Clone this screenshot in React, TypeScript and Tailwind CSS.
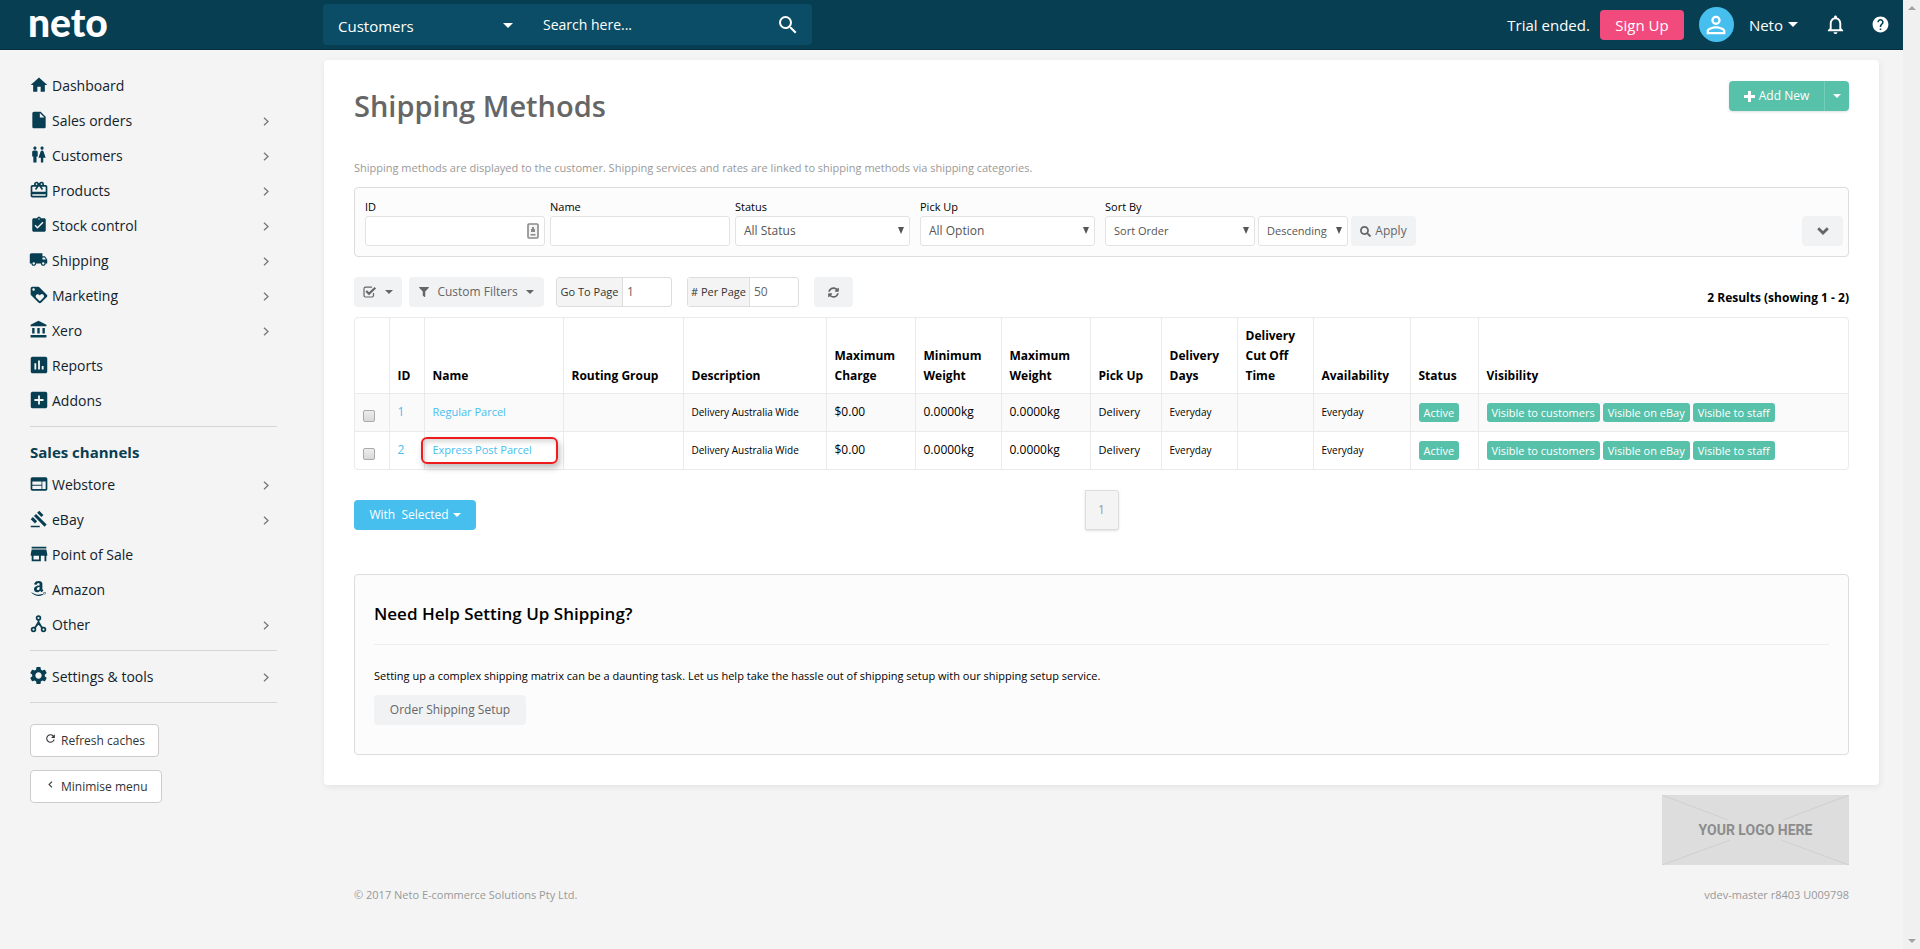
import { ReactNode } from "react"
import { IconType } from "react-icons"
import {
    MdAccountBalance, MdAddBox, MdAssessment, MdAssignmentTurnedIn, MdCardGiftcard, MdChevronLeft,
    MdGavel, MdHelp, MdHome, MdInsertDriveFile, MdLocalShipping, MdLoyalty, MdNotificationsNone,
    MdPersonOutline, MdRefresh, MdSearch, MdSettings, MdStore, MdWc, MdWeb,
} from "react-icons/md"
import { FaAmazon, FaFilter, FaSearch, FaSyncAlt } from "react-icons/fa"

type NavEntry = { label: string; icon: ReactNode; arrow?: boolean }

const mainNav: NavEntry[] = [
    { label: "Dashboard", icon: <MdHome size={20} /> },
    { label: "Sales orders", icon: <MdInsertDriveFile size={20} />, arrow: true },
    { label: "Customers", icon: <MdWc size={19} />, arrow: true },
    { label: "Products", icon: <MdCardGiftcard size={20} />, arrow: true },
    { label: "Stock control", icon: <MdAssignmentTurnedIn size={18} />, arrow: true },
    { label: "Shipping", icon: <MdLocalShipping size={19} />, arrow: true },
    { label: "Marketing", icon: <MdLoyalty size={20} />, arrow: true },
    { label: "Xero", icon: <MdAccountBalance size={19} />, arrow: true },
    { label: "Reports", icon: <MdAssessment size={22} /> },
    { label: "Addons", icon: <MdAddBox size={22} /> },
]

const channelNav: NavEntry[] = [
    { label: "Webstore", icon: <MdWeb size={20} />, arrow: true },
    { label: "eBay", icon: <MdGavel size={18} />, arrow: true },
    { label: "Point of Sale", icon: <MdStore size={22} /> },
    { label: "Amazon", icon: <FaAmazon size={17} /> },
    { label: "Other", icon: <NodesIcon />, arrow: true },
]

const columns = [
    { label: "", width: "w-[34px]" },
    { label: "ID", width: "w-[35px]" },
    { label: "Name", width: "w-[139px]" },
    { label: "Routing Group", width: "w-[120px]" },
    { label: "Description", width: "w-[143px]" },
    { label: "Maximum Charge", width: "w-[89px]" },
    { label: "Minimum Weight", width: "w-[86px]" },
    { label: "Maximum Weight", width: "w-[89px]" },
    { label: "Pick Up", width: "w-[71px]" },
    { label: "Delivery Days", width: "w-[76px]" },
    { label: "Delivery Cut Off Time", width: "w-[76px]" },
    { label: "Availability", width: "w-[97px]" },
    { label: "Status", width: "w-[68px]" },
    { label: "Visibility", width: "" },
]

const methods = [
    { id: 1, name: "Regular Parcel", marked: false },
    { id: 2, name: "Express Post Parcel", marked: true },
]

export default function App() {
    return (
        <div className="flex min-h-screen bg-[#f4f4f4] font-['Open_Sans','Noto_Sans',sans-serif] text-xs text-black">
            <div className="flex min-w-0 flex-1 flex-col">
                <Header />
                <div className="flex flex-1">
                    <Sidebar />
                    <main className="min-w-0 flex-1 pt-2.5 pr-6">
                        <div className="rounded bg-white px-[30px] pt-[21px] pb-[30px] shadow-[1px_2px_6px_rgba(0,0,0,0.07)]">
                            <TitleRow />
                            <p className="mt-[33px] text-[11px] leading-[18px] text-[#999]">
                                Shipping methods are displayed to the customer. Shipping services and rates are linked to shipping methods via shipping categories.
                            </p>
                            <FilterPanel />
                            <Toolbar />
                            <MethodsTable />
                            <TableFooter />
                            <HelpPanel />
                        </div>
                        <Footer />
                    </main>
                </div>
            </div>
            <div className="flex w-[17px] flex-col items-center justify-between bg-[#f0f0f0] py-1.5 text-[#a3a3a3]">
                <Triangle className="h-1 w-2 rotate-180" />
                <Triangle className="h-1 w-2" />
            </div>
        </div>
    )
}

function Header() {
    return (
        <header className="flex h-[50px] items-center border-b border-[#06303f] bg-[#083e51] text-white">
            <a href="#" className="w-[323px] pb-1.5 pl-7 font-[Lato] text-[39px] leading-[44px] font-black">neto</a>
            <form className="flex h-[41px] w-[489px] items-center rounded bg-[#0b4d66]">
                <div className="relative w-[205px]">
                    <select aria-label="Search in" className="w-full appearance-none bg-transparent pt-0.5 pl-[15px] text-[15px] leading-6 outline-none">
                        <option>Customers</option>
                    </select>
                    <Triangle className="pointer-events-none absolute top-[11px] right-[15px] h-[5px] w-2.5" />
                </div>
                <input aria-label="Search" placeholder="Search here..." className="min-w-0 flex-1 bg-transparent pl-[15px] text-sm leading-6 outline-none placeholder:text-white" />
                <button aria-label="Search" className="mr-3"><MdSearch size={24} /></button>
            </form>
            <div className="ml-auto flex items-center pr-[13px] text-[15px]">
                <span>Trial ended.</span>
                <button className="ml-2.5 h-[30px] w-[84px] rounded bg-[#f14b7e]">Sign Up</button>
                <span className="ml-[15px] flex size-[35px] items-center justify-center rounded-full bg-[#46bfef]">
                    <MdPersonOutline size={28} />
                </span>
                <button className="ml-[15px] flex items-center gap-[5px]">Neto <Triangle className="h-[5px] w-2.5" /></button>
                <button aria-label="Notifications" className="ml-[26px]"><MdNotificationsNone size={23} /></button>
                <button aria-label="Help" className="ml-6"><MdHelp size={19} /></button>
            </div>
        </header>
    )
}

function Sidebar() {
    return (
        <nav className="w-[324px] shrink-0 pt-[18px] pr-[47px] pl-[30px] text-[#083e51]">
            {mainNav.map((item) => <NavItem key={item.label} item={item} />)}
            <hr className="mt-2 border-[#d5d5d5]" />
            <h2 className="mt-3.5 mb-1 text-[15px] leading-[22px] font-bold">Sales channels</h2>
            {channelNav.map((item) => <NavItem key={item.label} item={item} />)}
            <hr className="mt-2 mb-2 border-[#d5d5d5]" />
            <NavItem item={{ label: "Settings & tools", icon: <MdSettings size={21} />, arrow: true }} />
            <hr className="mt-2 mb-[21px] border-[#d5d5d5]" />
            <SideButton label="Refresh caches" icon={MdRefresh} />
            <SideButton label="Minimise menu" icon={MdChevronLeft} />
        </nav>
    )
}

function NavItem({ item }: { item: NavEntry }) {
    return (
        <a href="#" className="flex h-[35px] items-center text-sm text-[#12222b]">
            <span className="mr-[5px] flex w-[17px] shrink-0 justify-center pb-0.5 text-[#083e51] [&>svg]:shrink-0">{item.icon}</span>
            {item.label}
            {item.arrow && (
                <svg viewBox="0 0 6 9" className="mt-0.5 mr-2 ml-auto h-[9px] w-1.5 fill-none stroke-[#777]" strokeWidth="1.3">
                    <path d="M1 .7 5 4.5 1 8.3" />
                </svg>
            )}
        </a>
    )
}

function SideButton({ label, icon: Icon }: { label: string; icon: IconType }) {
    return (
        <button className="mb-[13px] flex h-[33px] items-center gap-1 rounded border border-[#ccc] bg-white px-[13px] text-[#333]">
            <Icon size={13} className="mb-1" />
            {label}
        </button>
    )
}

function TitleRow() {
    return (
        <div className="flex items-start justify-between">
            <h1 className="pt-[5px] text-[29px] leading-10 font-semibold text-[#666]">Shipping Methods</h1>
            <div className="flex h-[30px] rounded bg-[#58c1a9] text-white shadow-sm">
                <button className="flex w-[95px] items-center justify-center gap-1"><PlusIcon /> Add New</button>
                <button aria-label="More" className="flex w-[25px] items-center justify-center border-l border-[#74cfba]">
                    <Triangle className="h-1 w-2" />
                </button>
            </div>
        </div>
    )
}

function FilterPanel() {
    return (
        <div className="mt-2.5 flex h-[70px] items-end rounded border border-[#ddd] bg-[#fcfcfc] pr-[5px] pb-2.5 pl-2.5">
            <Field id="id" label="ID">
                <div className="relative">
                    <input id="id" className="h-[30px] w-[180px] rounded-[3px] border border-[#e3e3e3] bg-white px-2" />
                    <ContactIcon />
                </div>
            </Field>
            <Field id="name" label="Name" className="ml-[5px]">
                <input id="name" className="h-[30px] w-[180px] rounded-[3px] border border-[#e3e3e3] bg-white px-2" />
            </Field>
            <Field id="status" label="Status" className="ml-[5px]">
                <Select id="status" value="All Status" className="w-[175px] text-xs" />
            </Field>
            <Field id="pickup" label="Pick Up" className="ml-2.5">
                <Select id="pickup" value="All Option" className="w-[175px] text-xs" />
            </Field>
            <Field id="sort" label="Sort By" className="ml-2.5">
                <Select id="sort" value="Sort Order" className="w-[150px] text-[11px]" />
            </Field>
            <Select id="direction" value="Descending" className="ml-[3px] w-[90px] text-[11px]" />
            <button className="ml-[3px] flex h-[30px] w-[65px] items-center justify-center gap-1 rounded bg-[#f1f2f4] text-[#666]">
                <FaSearch size={11} /> Apply
            </button>
            <button aria-label="More filters" className="ml-auto flex h-[30px] w-[41px] items-center justify-center rounded bg-[#f1f2f4] text-[#666]">
                <svg viewBox="0 0 12 8" className="h-2 w-3 fill-none stroke-current" strokeWidth="2.8">
                    <path d="M1.200 1.200 6 6l4.800-4.800" />
                </svg>
            </button>
        </div>
    )
}

function Field({ id, label, className = "", children }: { id: string; label: string; className?: string; children: ReactNode }) {
    return (
        <div className={`flex flex-col ${className}`}>
            <label htmlFor={id} className="text-[11px] leading-[18px]">{label}</label>
            {children}
        </div>
    )
}

function Select({ id, value, className }: { id: string; value: string; className: string }) {
    return (
        <div className={`relative text-[#555] ${className}`}>
            <select id={id} aria-label={value} className="h-[30px] w-full appearance-none rounded-[3px] border border-[#e3e3e3] bg-white pl-2 outline-none">
                <option>{value}</option>
            </select>
            <Triangle className="pointer-events-none absolute top-[11px] right-1.5 h-[7px] w-1.5" />
        </div>
    )
}

function Toolbar() {
    return (
        <div className="mt-5 flex h-[30px] text-[#666]">
            <button aria-label="Select rows" className="flex w-12 items-center justify-center gap-2 rounded bg-[#f1f2f4]">
                <CheckSquareIcon />
                <Triangle className="h-1 w-2" />
            </button>
            <button className="ml-[7px] flex w-[135px] items-center justify-center gap-2 rounded bg-[#f1f2f4]">
                <FaFilter size={10} />
                Custom Filters
                <Triangle className="h-1 w-2" />
            </button>
            <div className="ml-3 flex w-[116px] rounded-[3px] border border-[#ddd]">
                <label htmlFor="page" className="flex w-[66px] shrink-0 items-center justify-center border-r border-[#ddd] bg-[#f4f4f4] text-[11px] text-[#333]">Go To Page</label>
                <input id="page" defaultValue="1" className="w-full min-w-0 pl-1" />
            </div>
            <div className="ml-[15px] flex w-28 rounded-[3px] border border-[#ddd]">
                <label htmlFor="per-page" className="flex w-[62px] shrink-0 items-center justify-center border-r border-[#ddd] bg-[#f4f4f4] text-[11px] text-[#333]"># Per Page</label>
                <input id="per-page" defaultValue="50" className="w-full min-w-0 pl-1" />
            </div>
            <button aria-label="Refresh" className="ml-[15px] flex w-[39px] items-center justify-center rounded bg-[#f1f2f4]">
                <FaSyncAlt size={11} />
            </button>
            <strong className="ml-auto self-end leading-[18px] text-black">2 Results (showing 1 - 2)</strong>
        </div>
    )
}

function MethodsTable() {
    return (
        <div className="mt-2.5 rounded border border-[#eaeaea]">
            <table className="w-full table-fixed text-left leading-5 [&_td+td]:border-l [&_td]:border-[#eaeaea] [&_td]:pl-2 [&_th+th]:border-l [&_th]:border-[#eaeaea] [&_th]:pr-1.5 [&_th]:pl-2">
                <thead>
                    <tr className="h-[75px] align-bottom">
                        {columns.map((col) => (
                            <th key={col.label} className={`pb-[7px] font-bold ${col.width}`}>{col.label}</th>
                        ))}
                    </tr>
                </thead>
                <tbody>
                    {methods.map((method) => (
                        <tr key={method.id} className="h-[38px] border-t border-[#eaeaea] odd:bg-[#fafafa]">
                            <td>
                                <input type="checkbox" aria-label={`Select ${method.name}`} className="mt-2 block size-3 appearance-none rounded-xs border border-[#aaa] bg-linear-to-b from-[#ededed] to-[#d9d9d9]" />
                            </td>
                            <td><a href="#" className="text-[#46bfef]">{method.id}</a></td>
                            <td className="relative text-[11px]">
                                <a href="#" className="text-[#46bfef]">{method.name}</a>
                                {method.marked && (
                                    <span className="absolute inset-y-[5px] right-[5px] -left-1 rounded-md border-2 border-[#ee1c1c] shadow-[2px_4px_6px_rgba(0,0,0,0.25),inset_2px_3px_5px_rgba(0,0,0,0.15)]" />
                                )}
                            </td>
                            <td></td>
                            <td className="text-[10px]">Delivery Australia Wide</td>
                            <td>$0.00</td>
                            <td>0.0000kg</td>
                            <td>0.0000kg</td>
                            <td className="text-[11px]">Delivery</td>
                            <td className="text-[10px]">Everyday</td>
                            <td></td>
                            <td className="text-[10px]">Everyday</td>
                            <td className="text-[11px]"><Badges labels={["Active"]} /></td>
                            <td className="text-[11px]"><Badges labels={["Visible to customers", "Visible on eBay", "Visible to staff"]} /></td>
                        </tr>
                    ))}
                </tbody>
            </table>
        </div>
    )
}

function Badges({ labels }: { labels: string[] }) {
    return (
        <div className="flex gap-[3px]">
            {labels.map((label) => (
                <span key={label} className="rounded-[3px] bg-[#58c1a9] px-[5px] leading-[19px] whitespace-nowrap text-white">{label}</span>
            ))}
        </div>
    )
}

function TableFooter() {
    return (
        <div className="mt-5 grid h-10 grid-cols-[1fr_auto_1fr] items-end">
            <button className="flex h-[30px] w-[122px] items-center justify-center gap-1 rounded bg-[#46bfef] text-white">
                <span className="whitespace-pre">With  Selected</span>
                <Triangle className="h-1 w-2" />
            </button>
            <a href="#" className="flex h-10 w-[34px] items-center justify-center rounded-r-[3px] border border-[#ddd] bg-[#f4f4f4] text-[#999] shadow-sm">1</a>
        </div>
    )
}

function HelpPanel() {
    return (
        <section className="mt-11 rounded border border-[#ddd] bg-[#fcfcfc] px-[19px] pt-[25px] pb-[29px]">
            <h2 className="text-[17px] leading-7 font-semibold">Need Help Setting Up Shipping?</h2>
            <hr className="mt-4 mb-[22px] border-[#eee]" />
            <p className="text-[11px] leading-[18px]">
                Setting up a complex shipping matrix can be a daunting task. Let us help take the hassle out of shipping setup with our shipping setup service.
            </p>
            <button className="mt-2.5 h-[30px] w-[152px] rounded bg-[#f1f2f4] text-[#666]">Order Shipping Setup</button>
        </section>
    )
}

function Footer() {
    return (
        <footer className="px-[30px] pt-2.5 text-[11px] text-[#999]">
            <div className="relative ml-auto flex h-[70px] w-[187px] items-center justify-center bg-[#ddd]">
                <svg viewBox="0 0 187 70" className="absolute inset-0 stroke-[#cfcfcf]">
                    <path d="M0 0 66 25M187 0 121 25M0 70 68 45M187 70 119 45" />
                </svg>
                <span className="font-[Roboto] text-sm font-bold text-[#8c8c8c]">YOUR LOGO HERE</span>
            </div>
            <div className="mt-[21px] flex justify-between leading-[18px]">
                <span>© 2017 Neto E-commerce Solutions Pty Ltd.</span>
                <span>vdev-master r8403 U009798</span>
            </div>
        </footer>
    )
}

function Triangle({ className }: { className: string }) {
    return (
        <svg viewBox="0 0 8 4" preserveAspectRatio="none" className={className} fill="currentColor">
            <path d="M0 0h8L4 4z" />
        </svg>
    )
}

function PlusIcon() {
    return (
        <svg viewBox="0 0 11 11" className="size-[11px] fill-current">
            <path d="M4 0h3v4h4v3H7v4H4V7H0V4h4z" />
        </svg>
    )
}

function NodesIcon() {
    return (
        <svg viewBox="0 0 17 18" className="h-[18px] w-[17px] fill-none stroke-current" strokeWidth="1.7">
            <circle cx="8.5" cy="3" r="1.9" />
            <circle cx="3.5" cy="14.5" r="1.9" />
            <circle cx="13.5" cy="14.5" r="1.9" />
            <path d="M8.5 5v4M4.500 12.800 8.500 8.500l4 4.300M8.500 7 5 13M8.500 7l3.500 6" />
        </svg>
    )
}

function ContactIcon() {
    return (
        <svg viewBox="0 0 12 16" className="absolute top-[7px] right-1.5 h-4 w-3">
            <rect x="1" y="1" width="10" height="14" rx="1" fill="#f4f4f4" stroke="#8a8a8a" strokeWidth="1.6" />
            <path d="M5 4h2v2h1v3H4V6h1zM3.500 11h5v1.500h-5z" fill="#8a8a8a" />
        </svg>
    )
}

function CheckSquareIcon() {
    return (
        <svg viewBox="0 0 14 12" className="h-3 w-3.5 fill-none stroke-current">
            <path d="M10.500 7v2.500a1.500 1.500 0 0 1-1.500 1.500H2.500A1.500 1.500 0 0 1 1 9.500V2.700a1.500 1.500 0 0 1 1.500-1.500H9" strokeWidth="1.200" />
            <path d="M3.200 5 6 7.700 12.300 1.700" strokeWidth="2.200" />
        </svg>
    )
}
